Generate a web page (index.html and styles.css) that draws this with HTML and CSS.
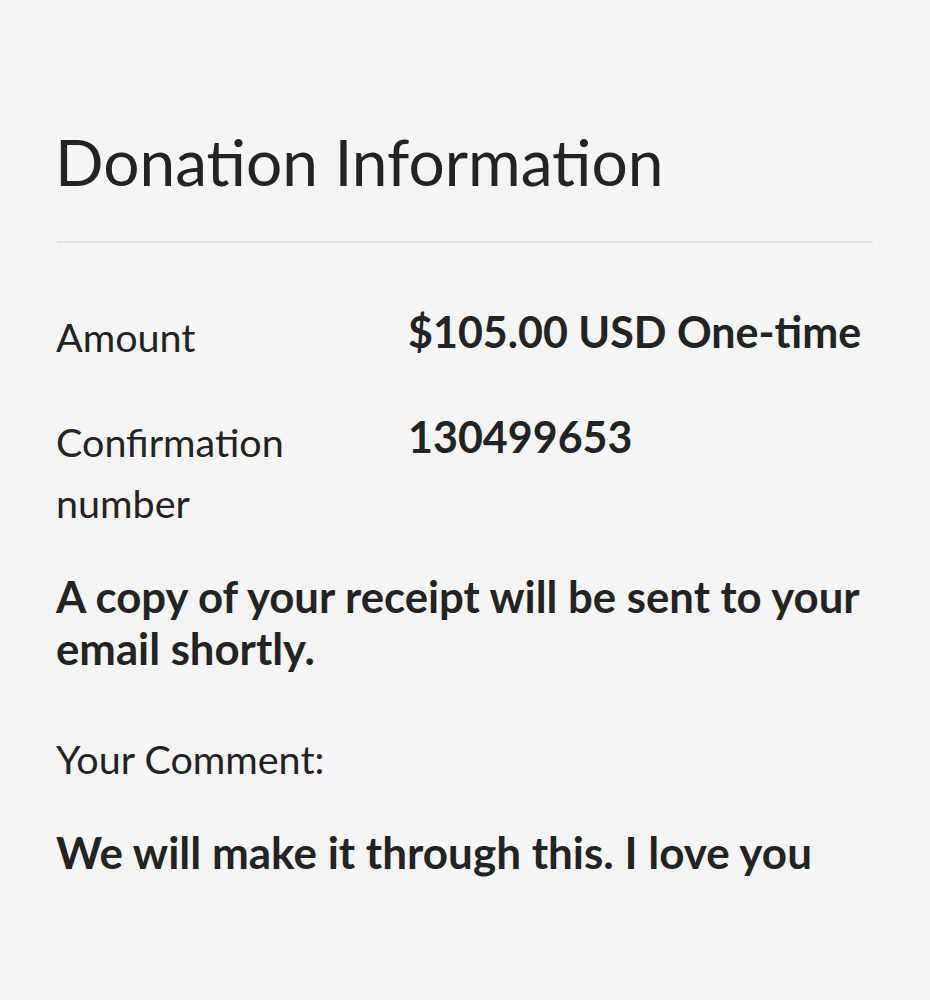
FILE: index.html
```html
<!DOCTYPE html>
<html lang="en">
<head>
    <meta charset="UTF-8">
    <meta name="viewport" content="width=device-width, initial-scale=1.0">
    <title>Donation Information</title>
    <link rel="stylesheet" href="styles.css">
</head>
<body>
    <main class="receipt">
        <h1 class="receipt-title">Donation Information</h1>
        <hr class="divider">
        <dl class="details">
            <div class="detail-row">
                <dt>Amount</dt>
                <dd>$105.00 USD One-time</dd>
            </div>
            <div class="detail-row">
                <dt>Confirmation number</dt>
                <dd>130499653</dd>
            </div>
        </dl>
        <p class="notice">A copy of your receipt will be sent to your email shortly.</p>
        <p class="comment-label">Your Comment:</p>
        <p class="comment">We will make it through this. I love you</p>
    </main>
</body>
</html>
```
FILE: styles.css
```css
body {
    font-family: Lato, "Open Sans", sans-serif;
    color: #232323;
    background-color: #f5f5f5;
    margin: 0;
}
.receipt {
    padding: 124px 57px 0 56px;
}
.receipt-title {
    font-size: 64px;
    font-weight: 400;
    line-height: 1.2;
    margin: 0 0 0 -1px;
}
.divider {
    height: 2px;
    border: none;
    background-color: #e4e4e4;
    margin: 40px 0 0 1px;
}
.details {
    margin: 63px 0 0 0;
    display: flex;
    flex-direction: column;
    gap: 44px;
}
.detail-row {
    display: grid;
    grid-template-columns: 352px 1fr;
    align-items: start;
}
.detail-row dt {
    font-size: 39.5px;
    line-height: 61px;
}
.detail-row dd {
    margin: 0;
    font-size: 43px;
    font-weight: 700;
    line-height: 1.2;
}
.notice {
    font-size: 43.7px;
    font-weight: 700;
    line-height: 52px;
    margin: 37px 0 0 0;
}
.comment-label {
    font-size: 39.5px;
    line-height: 61px;
    margin: 54px 0 0 0;
}
.comment {
    font-size: 44px;
    font-weight: 700;
    line-height: 52px;
    margin: 37px 0 0 0;
}
```
